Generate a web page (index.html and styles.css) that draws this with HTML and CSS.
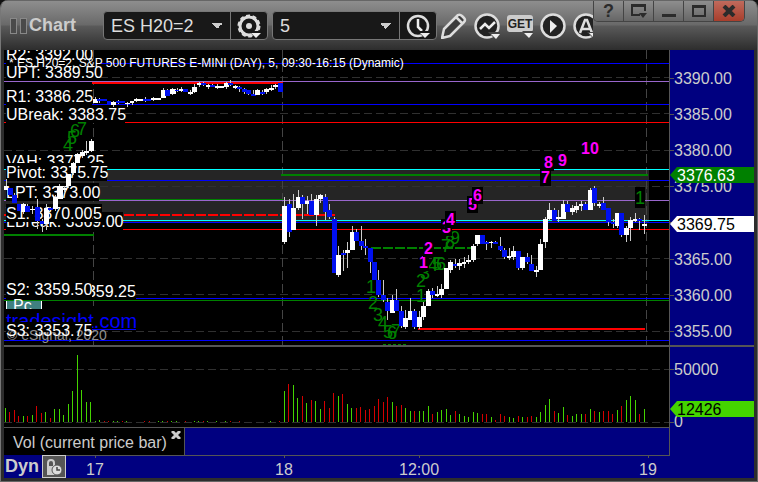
FILE: index.html
```
<!DOCTYPE html>
<html lang="en">

    <head>
        <meta charset="utf-8">
        <title>Chart - ES H20=2</title>
        <link rel="stylesheet" href="styles.css">
    </head>

    <body>
        <div class="window">
            <div class="header">
                <div class="grip"><i></i><i></i></div>
                <h1 class="title">Chart</h1>
                <div class="tools">
                    <div class="combo">
                        <select aria-label="Symbol">
                            <option>ES H20=2</option>
                        </select>
                        <button aria-label="Settings">
                            <svg width="26" height="26" viewBox="0 0 26 26">
                                <circle cx="12" cy="12" r="9" fill="none" stroke="#ddd" stroke-width="3"/>
                                <circle cx="12" cy="12" r="10.5" fill="none" stroke="#ddd" stroke-width="2" stroke-dasharray="4 2.6"/>
                                <circle cx="12" cy="12" r="3" fill="#ddd"/>
                                <path d="M12 17h14l-7 8z" fill="#181818"/>
                                <path d="M14 19h10l-5 5z" fill="#eee"/>
                            </svg>
                        </button>
                    </div>
                    <div class="combo">
                        <select aria-label="Interval">
                            <option>5</option>
                        </select>
                        <button aria-label="Time template">
                            <svg width="26" height="26" viewBox="0 0 26 26">
                                <circle cx="12" cy="12" r="10" fill="none" stroke="#ddd" stroke-width="2.5"/>
                                <path d="M12 5v8l4 4" fill="none" stroke="#eee" stroke-width="2.5"/>
                                <path d="M12 17h14l-7 8z" fill="#181818"/>
                                <path d="M14 19h10l-5 5z" fill="#eee"/>
                            </svg>
                        </button>
                    </div>
                    <button class="tool" aria-label="Draw">
                        <svg width="26" height="26" viewBox="0 0 26 26">
                            <path d="M1 25l2-9L17 2q2-1 4 1l2 2q2 2 0 4L9 23zM15 4l6 6" fill="#3c3c3c" stroke="#ddd" stroke-width="2.5" stroke-linejoin="round"/>
                        </svg>
                    </button>
                    <button class="tool" aria-label="Studies">
                        <svg width="26" height="26" viewBox="0 0 26 26">
                            <circle cx="13" cy="13" r="11.5" fill="#222" stroke="#ddd" stroke-width="2.5"/>
                            <path d="M6 16l5-5 4 4 6-6" fill="none" stroke="#eee" stroke-width="2.5"/>
                            <path d="M14 19h14l-7 7z" fill="#444"/>
                            <path d="M17 21h9l-4 5z" fill="#eee"/>
                        </svg>
                    </button>
                    <button class="tool" aria-label="Get">
                        <svg width="26" height="26" viewBox="0 0 26 26">
                            <rect x="0" y="2" width="26" height="17" rx="3" fill="#ccc"/>
                            <text x="13" y="15" class="get" text-anchor="middle">GET</text>
                            <path d="M15 18h13l-6 7z" fill="#444"/>
                            <path d="M17 20h9l-4 5z" fill="#eee"/>
                        </svg>
                    </button>
                    <button class="tool" aria-label="Play">
                        <svg width="26" height="26" viewBox="0 0 26 26">
                            <circle cx="13" cy="13" r="11.5" fill="#222" stroke="#ddd" stroke-width="2.5"/>
                            <path d="M10 7l7 6-7 7z" fill="#eee"/>
                        </svg>
                    </button>
                    <button class="tool" aria-label="Alerts">
                        <svg width="26" height="26" viewBox="0 0 26 26">
                            <circle cx="13" cy="13" r="11.5" fill="#222" stroke="#ddd" stroke-width="2.5"/>
                            <path d="M7 20l5-13h2l5 13M9 16h8" fill="none" stroke="#ddd" stroke-width="2.5"/>
                            <path d="M14 19h13l-6 7z" fill="#444"/>
                            <path d="M16 20h9l-4 5z" fill="#eee"/>
                        </svg>
                    </button>
                </div>
                <div class="controls">
                    <button aria-label="Help"><span>?</span></button>
                    <button aria-label="Dock">
                        <svg width="16" height="14" viewBox="0 0 16 14">
                            <path d="M9 11H1V1h13v6M1 2h13" fill="none" stroke="#2b2b2b" stroke-width="2"/>
                            <path d="M8 9h8l-4 5z" fill="#2b2b2b"/>
                        </svg>
                    </button>
                    <button aria-label="Minimize">
                        <svg width="14" height="14" viewBox="0 0 14 14"><path d="M0 10h14v3H0z" fill="#2b2b2b"/></svg>
                    </button>
                    <button aria-label="Maximize">
                        <svg width="14" height="14" viewBox="0 0 14 14"><path d="M1 2h12v10H1zM1 3h12" fill="none" stroke="#2b2b2b" stroke-width="2"/></svg>
                    </button>
                    <button class="close" aria-label="Close">
                        <svg width="14" height="12" viewBox="0 0 14 12"><path d="M2 1l10 10M12 1L2 11" stroke="#2b2b2b" stroke-width="4"/></svg>
                    </button>
                </div>
            </div>

            <div class="panes">
                <svg class="pane" id="price" viewBox="4 50 750 295"></svg>
                <div class="divider"></div>
                <svg class="pane" id="volume" viewBox="4 347 750 80"></svg>
                <div class="tabs">
                    <div class="tab">
                        <span>Vol (current price bar)</span>
                        <button aria-label="Close study">
                            <svg width="10" height="8" viewBox="0 0 10 8"><path d="M1 0l8 8M9 0L1 8" stroke="#ccc" stroke-width="3"/></svg>
                        </button>
                    </div>
                </div>
                <div class="times">
                    <span class="dyn">Dyn</span>
                    <button class="lock" aria-label="Lock time">
                        <svg width="18" height="18" viewBox="0 0 18 18">
                            <path d="M3 9V5q0-3 3-3t3 3v3" fill="none" stroke="#ccc" stroke-width="2"/>
                            <path d="M2 8h9v9H2z" fill="#ccc"/>
                            <circle cx="12" cy="12" r="5" fill="#ddd" stroke="#555"/>
                            <path d="M12 9v3h3" fill="none" stroke="#444" stroke-width="1.5"/>
                        </svg>
                    </button>
                    <svg class="scale" id="time" viewBox="66 455 688 23"></svg>
                </div>
            </div>
        </div>
        <script src="chart.js"></script>
    </body>

</html>
```
FILE: styles.css
```
* {
    box-sizing: border-box;
    margin: 0;
    padding: 0;
}

body {
    background: #111;
    font-family: "Liberation Sans", Arial, sans-serif;
    font-size: 16px;
    color: #ccc;
}

button {
    border: none;
    background: none;
    color: inherit;
    font-family: inherit;
    cursor: pointer;
}

svg {
    display: block;
}

.window {
    background: #2d2d2d;
    border-left: 1px solid #777;
    border-right: 1px solid #666;
    border-bottom: 1px solid #666;
    border-radius: 8px 8px 0 0;
    padding: 0 3px 3px;
    overflow: hidden;
}

.header {
    display: flex;
    align-items: center;
    height: 50px;
    margin: 0 -3px;
    padding: 0 12px 0 9px;
    border-top: 1px solid #666;
    background: linear-gradient(#8e8e8e, #696969 24px, #5a5a5a 25px, #2d2d2d 49px);
}

.grip {
    display: flex;
    gap: 3px;
    width: 19px;
}

.grip i {
    width: 7px;
    height: 16px;
    border: 1px solid #888;
    background: #4a4a4a;
}

.title {
    width: 74px;
    font-size: 18px;
    font-weight: bold;
    color: #ccc;
}

.tools {
    display: flex;
    flex: 1;
    align-items: center;
    gap: 6px;
    min-width: 0;
    overflow: hidden;
}

.combo {
    display: flex;
    flex: none;
    height: 29px;
    margin-right: -2px;
    border: 1px solid #777;
    border-radius: 4px;
    background: #181818;
    overflow: hidden;
}

.combo select {
    width: 126px;
    padding: 0 7px;
    border: none;
    appearance: none;
    background: linear-gradient(to bottom left, #ccc 50%, transparent 50%) 107px 11px / 6px 6px no-repeat,
        linear-gradient(to bottom right, #ccc 50%, transparent 50%) 113px 11px / 6px 6px no-repeat;
    color: #ddd;
    font-family: inherit;
    font-size: 18px;
}

.combo button {
    width: 37px;
    padding: 2px 6px 0;
    border-left: 1px solid #777;
}

.tool {
    flex: none;
    width: 27px;
}

.get {
    font-size: 12px;
    font-weight: bold;
    fill: #222;
}

.controls {
    display: flex;
    align-self: flex-start;
    border: 1px solid #444;
    border-top: none;
    border-radius: 0 0 5px 5px;
    overflow: hidden;
}

.controls button {
    display: flex;
    align-items: center;
    justify-content: center;
    width: 30px;
    height: 20px;
    border-right: 1px solid #444;
    background: linear-gradient(#8e8e8e, #666);
    color: #2b2b2b;
    font-size: 18px;
    font-weight: bold;
}

.controls .close {
    border-right: none;
    background: linear-gradient(#c06a5c, #a83e2c);
}

.panes {
    background: #000080;
}

.pane {
    width: 100%;
    height: auto;
    background: #000;
}

#volume {
    overflow: visible;
}

.divider {
    height: 2px;
    background: #555;
}

.panes text {
    font-size: 16px;
    fill: #fff;
    white-space: pre;
}

.panes .axis {
    fill: #ccc;
}

.panes .dark {
    fill: #000;
}

.panes .name {
    font-size: 12px;
}

.panes .site {
    font-size: 20px;
    fill: #00f;
}

.panes .copy {
    font-size: 14px;
    fill: #909090;
}

.panes .up {
    fill: #f0f;
    font-weight: bold;
}

.panes .down {
    font-size: 18px;
    fill: #008000;
}

.tabs {
    width: 88.8%;
    border-top: 1px solid #555;
    border-right: 1px solid #555;
}

.tab {
    display: flex;
    width: 181px;
    height: 27px;
    padding-left: 9px;
    border-right: 1px solid #555;
    background: #000;
    line-height: 30px;
}

.tab span {
    flex: 1;
    white-space: nowrap;
}

.tab button {
    align-self: flex-start;
    margin: 3px 3px 0 0;
}

.times {
    display: flex;
    align-items: center;
}

.dyn {
    width: 38px;
    padding-left: 1px;
    font-size: 18px;
    font-weight: bold;
}

.lock {
    width: 24px;
    height: 23px;
    padding: 1px 2px;
    border: 1px solid #ccc;
    background: #555;
}

.scale {
    flex: 1;
    min-width: 0;
}
```
FILE: chart.js
```
var NS = "http://www.w3.org/2000/svg";
var price = document.getElementById("price");
var volume = document.getElementById("volume");
var time = document.getElementById("time");

function add(parent, name, attrs, text) {
    var el = document.createElementNS(NS, name);
    for (var key in attrs) {
        el.setAttribute(key, attrs[key]);
    }
    if (text) {
        el.textContent = text;
    }
    parent.appendChild(el);
}
function box(parent, x1, y1, x2, y2, color) {
    add(parent, "rect", { x: x1, y: y1, width: x2 - x1, height: y2 - y1, fill: color, "shape-rendering": "crispEdges" });
}
function dash(parent, x1, y1, x2, y2, color, pattern, width) {
    add(parent, "path", {
        d: "M" + x1 + " " + y1 + "L" + x2 + " " + y2,
        stroke: color, "stroke-width": width || 1, "stroke-dasharray": pattern, "shape-rendering": "crispEdges"
    });
}
function write(parent, x, y, text, name) {
    add(parent, "text", { x: x, y: y, "class": name || "" }, text);
}
function tag(parent, y, text, color, name) {
    add(parent, "path", { d: "M670 " + y + "l7 -8H754v16H677z", fill: color });
    write(parent, 677, y + 6, text, name);
}

// grid and session breaks
[77, 113, 150, 186, 258, 294, 331].forEach(function (y) {
    dash(price, 4, y + 0.5, 669, y + 0.5, "#303030", "8 4");
});
box(price, 4, 170, 649, 222, "#252525");
dash(price, 4, 186.5, 649, 186.5, "#303030", "8 4");
[93, 282, 646].forEach(function (x) {
    dash(price, x + 0.5, 50, x + 0.5, 345, "#444", "9 4");
});

// levels: x1, x2, y, height, color
[
    [4, 669, 63, 1, "#00f"], [4, 669, 81, 1, "#9966cc"], [92, 283, 82, 2, "#f00"],
    [4, 669, 104, 1, "#00f"], [4, 669, 122, 1, "#f00"], [4, 669, 169, 1, "#0ff"],
    [281, 648, 174, 2, "#008000"], [4, 669, 180, 1, "#00f"], [4, 283, 199, 1, "#008000"],
    [4, 669, 200, 1, "#9966cc"], [4, 669, 220, 1, "#0ff"], [4, 669, 222, 1, "#00f"],
    [4, 669, 229, 1, "#f00"], [4, 94, 234, 2, "#008000"], [4, 669, 298, 1, "#00f"],
    [4, 669, 300, 1, "#008000"], [418, 645, 328, 2, "#f00"], [4, 669, 340, 1, "#00f"]
].forEach(function (l) {
    box(price, l[0], l[2], l[1], l[2] + l[3], l[4]);
});
dash(price, 4, 215, 335, 215, "#f00", "10 2", 2);
dash(price, 371, 248, 472, 248, "#008000", "10 2", 2);

// level names, later ones cover earlier ones
[
    [60, "R2: 3392.00", 93], [78, "UPT: 3389.50", 101], [102, "R1: 3386.25", 92],
    [120, "UBreak: 3383.75", 125], [167, "VAH: 3377.25", 104], [178, "Pivot: 3375.75", 107],
    [198, "LPT: 3373.00", 99], [227, "LBreak: 3369.00", 123], [219, "VAL: 3370.25", 102],
    [219, "S1: 3370.00", 92]
].forEach(function (l) {
    box(price, 6, l[0] - 15, l[2], l[0] + 3, "#000");
    write(price, 6, l[0], l[1]);
});
box(price, 6, 283, 136, 300, "#000");
write(price, 78, 297, "3359.25");
box(price, 6, 280, 92, 298, "#000");
write(price, 6, 295, "S2: 3359.50");
box(price, 7, 301, 42, 309, "#408080");
box(price, 6, 301, 7, 309, "#fff");
box(price, 41, 301, 42, 309, "#fff");
write(price, 13, 311, "Pc");
box(price, 6, 309, 136, 330, "#000");
write(price, 6, 328, "tradesight.com", "site");
box(price, 6, 329, 136, 330, "#00f");
box(price, 6, 322, 92, 339, "#000");
write(price, 7, 340, "© eSignal, 2020", "copy");
write(price, 6, 336, "S3: 3353.75");
write(price, 9, 67, "* ES,H20=2, S&P 500 FUTURES E-MINI (DAY), 5, 09:30-16:15 (Dynamic)", "name");

// down counts
[
    [63, 151, "4"], [67, 144, "5"], [70, 137, "6"], [77, 135, "7"],
    [366, 293, "1"], [368, 309, "2"], [373, 321, "3"], [378, 329, "4"], [383, 338, "5"], [387, 339, "6"], [391, 337, "7"],
    [416, 302, "1"], [416, 287, "2"], [420, 279, "3"], [428, 271, "4"], [432, 270, "5"], [436, 270, "6"],
    [441, 252, "7"], [445, 248, "8"], [450, 244, "9"]
].forEach(function (n) {
    write(price, n[0], n[1], n[2], "down");
});
dash(price, 383, 344.5, 407, 344.5, "#008000", "3 2");
box(price, 635, 187, 645, 208, "#000");
write(price, 635, 204, "1", "down");

// up counts
[
    [419, 268, "1"], [424, 254, "2"], [442, 233, "3"], [446, 225, "4"], [468, 210, "5"],
    [473, 201, "6"], [541, 183, "7"], [544, 168, "8"], [558, 166, "9"], [581, 154, "10"]
].forEach(function (n) {
    box(price, n[0] - 1, n[1] - 14, n[0] + 9 * n[2].length + 1, n[1] + 3, "#000");
    write(price, n[0], n[1], n[2], "up");
});

// candles: x, width, top, bottom, wick top, wick bottom, white or blue
var candles = `
4 4 186 190 179 190 w
8 5 188 195 188 195 b
12 5 195 203 193 203 b
17 5 204 211 204 211 b
21 5 204 212 203 214 w
25 5 206 212 204 212 b
30 6 209 210 206 214 w
35 5 207 221 199 229 b
40 5 221 224 219 232 b
44 5 208 224 204 230 w
48 5 208 210 207 210 b
53 5 197 209 195 211 w
57 6 186 199 184 199 w
62 5 188 190 186 192 w
66 5 174 186 174 188 w
71 5 163 173 162 175 w
75 5 154 163 153 163 w
80 5 152 156 150 158 w
84 5 151 153 141 155 w
89 5 141 151 139 152 w
93 5 99 103 97 103 w
97 10 99 101 98 103 b
107 4 101 105 101 105 b
111 5 102 105 101 107 w
116 9 101 103 100 104 b
125 5 103 104 102 107 w
130 4 101 103 101 105 w
134 9 99 101 98 102 w
143 8 99 101 97 102 b
151 10 98 100 97 101 w
161 5 90 98 88 98 w
165 5 90 96 89 96 b
170 6 89 94 88 95 w
175 4 90 91 88 92 b
179 5 89 91 87 92 w
183 5 89 92 89 92 b
188 5 92 94 90 95 w
192 5 87 92 84 93 w
197 5 83 85 82 87 w
201 5 83 85 82 86 b
206 4 85 87 84 89 w
210 5 85 87 84 87 b
215 9 86 88 84 89 w
224 5 83 87 82 89 w
228 5 83 85 80 86 b
233 5 86 88 85 89 w
237 5 87 89 86 92 b
242 5 89 92 88 94 b
246 5 90 94 90 95 b
251 5 94 96 90 96 b
255 5 90 95 89 95 w
260 5 92 94 90 95 b
264 5 89 92 88 94 w
269 5 88 90 85 91 w
273 5 85 87 84 89 w
278 5 83 92 83 92 b
282 5 206 242 197 244 w
287 5 204 232 199 237 b
291 5 208 230 194 230 w
296 5 197 208 190 210 w
300 5 197 204 195 219 b
305 4 201 204 196 214 w
309 5 201 215 194 215 b
314 5 199 215 195 226 w
318 5 195 199 194 203 w
323 5 197 212 194 220 b
327 5 210 217 204 219 b
332 5 219 273 217 273 b
336 5 255 275 246 277 w
341 5 253 255 250 271 b
345 5 250 253 242 268 w
350 5 232 250 226 250 w
354 5 232 241 229 241 b
359 5 241 246 226 250 b
363 5 246 248 239 255 b
368 5 248 262 248 273 b
372 5 262 280 262 280 b
376 5 280 295 270 297 b
381 5 295 300 280 302 b
385 5 302 311 298 320 b
390 5 300 313 295 313 w
394 5 300 311 289 311 b
399 5 311 326 306 328 b
403 5 318 327 310 329 w
408 5 311 320 298 320 w
412 5 311 327 309 329 b
417 5 317 327 311 329 w
421 5 306 317 302 320 w
426 5 291 306 289 306 w
430 5 291 295 288 298 b
435 4 294 296 286 297 w
439 5 289 295 284 298 w
444 5 268 289 268 289 w
448 5 262 270 260 273 w
453 4 264 266 259 268 b
457 5 263 266 259 270 w
462 4 262 264 257 268 w
466 5 260 262 255 264 w
471 5 246 260 244 262 w
475 5 235 244 235 246 w
480 5 235 244 235 244 b
484 5 242 244 241 250 b
489 5 242 243 241 248 w
493 5 242 244 241 244 b
498 5 246 250 237 251 b
502 5 250 257 248 259 b
507 4 256 258 248 260 w
511 5 251 257 246 260 w
516 5 251 268 251 270 b
520 5 257 268 257 270 w
525 5 257 262 253 264 b
529 5 264 271 255 271 b
534 5 270 272 266 277 w
538 5 244 270 239 270 w
543 5 219 242 217 248 w
547 5 210 219 203 220 w
552 5 210 221 208 221 b
556 5 217 219 210 222 w
561 5 204 219 200 219 w
565 5 204 212 201 212 b
570 5 208 212 205 215 w
574 5 206 210 202 213 w
579 4 204 206 201 211 w
583 5 204 210 202 210 b
588 5 190 210 188 210 w
592 5 188 203 186 206 b
597 4 204 206 202 208 w
601 5 203 210 197 210 b
606 5 208 222 208 226 b
611 4 222 224 219 228 b
615 5 213 226 213 228 w
619 5 213 235 213 237 b
624 5 228 235 226 242 w
628 5 220 228 217 241 w
633 4 219 221 213 222 w
637 5 219 221 218 230 b
642 5 224 226 215 234 w`;
candles.trim().split("\n").forEach(function (row) {
    var c = row.split(" ");
    var x = +c[0], w = +c[1];
    box(price, x + 2, +c[4], x + 3, +c[5], "#ccc");
    box(price, x, +c[2], x + w, +c[3], c[6] == "w" ? "#fff" : "#0010f0");
});

// price axis
box(price, 669, 50, 754, 345, "#000080");
box(price, 669, 50, 670, 345, "#555");
for (var i = 0; i < 8; i++) {
    var y = Math.round(78 + i * 36.1);
    box(price, 670, y, 674, y + 1, "#555");
    if (i != 4) {
        write(price, 674, y + 6, (3390 - i * 5) + ".00", "axis");
    }
}
tag(price, 175, "3376.63", "#008000");
tag(price, 224, "3369.75", "#fff", "dark");

// volume: height and color of each bar, 4.5px apart
dash(volume, 4, 369.5, 669, 369.5, "#303030", "8 4");
dash(volume, 4, 422.5, 669, 422.5, "#303030", "8 4");
var bars = "14g 10r 12r 6r 6g 6r 7g 16r 9r 10g 4r 13g 13g 7g 18g 31g 67g 32g 20g 20g 1g 2g 1r 1r 1g 1g 1r 1g 0g 0g 0g " +
    "1r 1r 0g 1g 1g 1r 1g 1g 0g 1r 0g 1g 1g 1r 1g 0g 1g 0g 1g 1r 0g 1r 0g 0g 0g 0g 0g 0g 1g 0g 1r " +
    "31g 38r 37g 24g 26r 19g 22r 21g 13g 21r 14r 29r 26g 28r 18g 14g 14r 15r 12r 13r 16r 23r 20r 25r 20g 16r 17r " +
    "14g 11g 11r 11g 11g 16g 8r 10g 12g 13g 7g 11r 8g 6g 5g 10g 9g 8r 8r 5g 2r 8r 6r 5g 4g 6r 5g 5r " +
    "6r 5g 10g 17g 23g 11r 9g 15g 7r 6g 8g 8g 8r 13g 11r 10g 11r 11r 8r 12g 16r 22g 26g 22g 8r 13g";
bars.split(" ").forEach(function (bar, n) {
    var x = Math.floor(5 + n * 4.5);
    box(volume, x, 422 - parseInt(bar), x + 1, 422, bar.slice(-1) == "g" ? "#44d400" : "#d40000");
});
box(volume, 669, 347, 754, 427, "#000080");
box(volume, 669, 347, 670, 427, "#555");
box(volume, 670, 369, 674, 370, "#555");
box(volume, 670, 422, 674, 423, "#555");
write(volume, 674, 375, "50000", "axis");
write(volume, 674, 427, "0", "axis");
tag(volume, 409, "12426", "#44d400", "dark");

// time axis
box(time, 66, 455, 670, 456, "#555");
[[95, 86, "17"], [284, 275, "18"], [419, 399, "12:00"], [648, 639, "19"]].forEach(function (t) {
    box(time, t[0], 455, t[0] + 1, 458, "#555");
    write(time, t[1], 475, t[2], "axis");
});
```
